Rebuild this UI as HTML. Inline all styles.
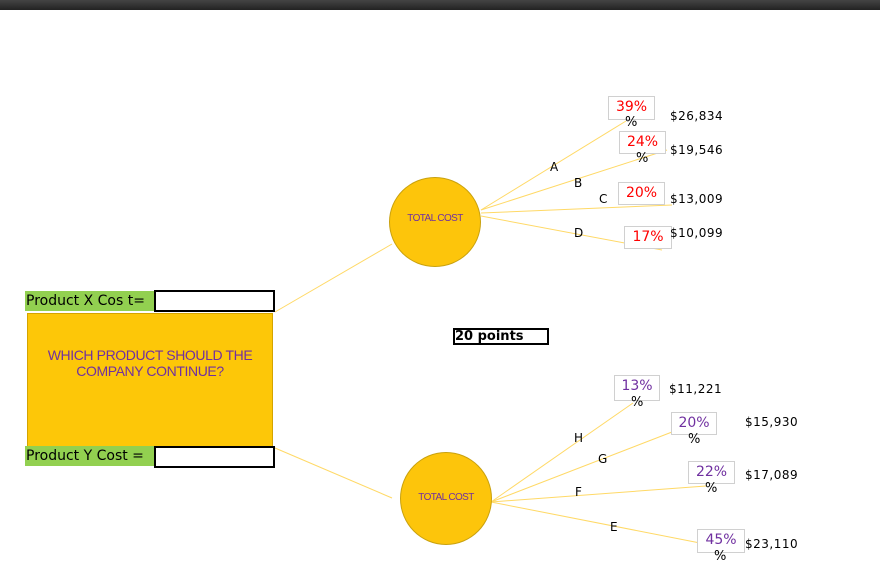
<!DOCTYPE html>
<html><head><meta charset="utf-8"><style>
html,body{margin:0;padding:0;width:880px;height:572px;overflow:hidden;background:#fff;font-family:"DejaVu Sans","Liberation Sans",sans-serif;}
.a{position:absolute;}
.top{left:0;top:0;width:880px;height:10px;background:linear-gradient(#444,#222);}
.pb{position:absolute;border:1px solid #d0d0d0;background:#fff;font-size:14px;text-align:center;line-height:21px;}
.red{color:#f00}.pur{color:#7030a0}
.pc{position:absolute;font-size:13px;color:#000;}
.d{position:absolute;font-size:12px;letter-spacing:0.5px;color:#000;}
.l{position:absolute;font-size:12px;color:#000;}
.grn{position:absolute;background:#92d050;font-size:14px;color:#000;line-height:21px;}
.inp{position:absolute;border:2px solid #000;background:#fff;box-sizing:border-box;}
.circ{position:absolute;border-radius:50%;background:#fdc50b;border:1px solid #c9a10d;box-sizing:border-box;display:flex;align-items:center;justify-content:center;font-family:"Liberation Sans",sans-serif;font-size:10px;color:#7030a0;letter-spacing:-0.6px;padding-bottom:8px;}
</style></head><body>
<div class="a top"></div>
<svg class="a" style="left:0;top:0" width="880" height="572">
<g stroke="#ffd966" stroke-width="1" fill="none">
<line x1="275" y1="312" x2="392" y2="244"/>
<line x1="275" y1="448" x2="392" y2="498"/>
<line x1="481" y1="210" x2="626" y2="121"/>
<line x1="481" y1="210" x2="667" y2="150"/>
<line x1="481" y1="213" x2="672" y2="205"/>
<line x1="481" y1="216" x2="662" y2="250"/>
<line x1="491" y1="502" x2="633" y2="403"/>
<line x1="491" y1="502" x2="672" y2="432"/>
<line x1="491" y1="502" x2="706" y2="486"/>
<line x1="491" y1="502" x2="700" y2="543"/>
</g></svg>
<div class="circ" style="left:389px;top:177px;width:92px;height:90px;">TOTAL COST</div>
<div class="circ" style="left:400px;top:452px;width:92px;height:93px;padding-bottom:2px;">TOTAL COST</div>

<div class="grn" style="left:25px;top:291px;width:129px;height:20px;padding-left:1px;">Product X Cos t=</div>
<div class="inp" style="left:154px;top:290px;width:121px;height:22px;"></div>
<div class="a" style="left:27px;top:313px;width:246px;height:135px;background:#fdc708;border:1px solid #d4a400;box-sizing:border-box;font-family:'Liberation Sans',sans-serif;font-size:14px;color:#7030a0;text-align:center;padding-top:33px;line-height:16px;letter-spacing:-0.4px;">WHICH PRODUCT SHOULD THE<br>COMPANY CONTINUE?</div>
<div class="grn" style="left:25px;top:446px;width:129px;height:20px;padding-left:1px;">Product Y Cost =</div>
<div class="inp" style="left:154px;top:446px;width:121px;height:22px;"></div>

<div class="a" style="left:453px;top:328px;width:96px;height:17px;border:2px solid #000;box-sizing:border-box;font-size:13px;font-weight:bold;line-height:13px;padding-left:0px;">20 points</div>

<div class="pb red" style="left:608px;top:96px;width:45px;height:22px;">39%</div><div class="pc" style="left:625px;top:115px;">%</div>
<div class="pb red" style="left:619px;top:131px;width:45px;height:21px;">24%</div><div class="pc" style="left:636px;top:151px;">%</div>
<div class="pb red" style="left:618px;top:182px;width:45px;height:21px;">20%</div>
<div class="pb red" style="left:624px;top:226px;width:46px;height:21px;">17%</div>
<div class="d" style="left:670px;top:109px;">$26,834</div>
<div class="d" style="left:670px;top:143px;">$19,546</div>
<div class="d" style="left:670px;top:192px;">$13,009</div>
<div class="d" style="left:670px;top:226px;">$10,099</div>
<div class="l" style="left:550px;top:160px;">A</div>
<div class="l" style="left:574px;top:176px;">B</div>
<div class="l" style="left:599px;top:192px;">C</div>
<div class="l" style="left:574px;top:226px;">D</div>

<div class="pb pur" style="left:614px;top:375px;width:44px;height:24px;">13%</div><div class="pc" style="left:631px;top:395px;">%</div>
<div class="pb pur" style="left:671px;top:412px;width:44px;height:21px;">20%</div><div class="pc" style="left:688px;top:432px;">%</div>
<div class="pb pur" style="left:688px;top:461px;width:45px;height:21px;">22%</div><div class="pc" style="left:705px;top:481px;">%</div>
<div class="pb pur" style="left:697px;top:529px;width:46px;height:22px;">45%</div><div class="pc" style="left:714px;top:549px;">%</div>
<div class="d" style="left:669px;top:382px;">$11,221</div>
<div class="d" style="left:745px;top:415px;">$15,930</div>
<div class="d" style="left:745px;top:468px;">$17,089</div>
<div class="d" style="left:745px;top:537px;">$23,110</div>
<div class="l" style="left:574px;top:431px;">H</div>
<div class="l" style="left:598px;top:452px;">G</div>
<div class="l" style="left:575px;top:485px;">F</div>
<div class="l" style="left:610px;top:520px;">E</div>
</body></html>
